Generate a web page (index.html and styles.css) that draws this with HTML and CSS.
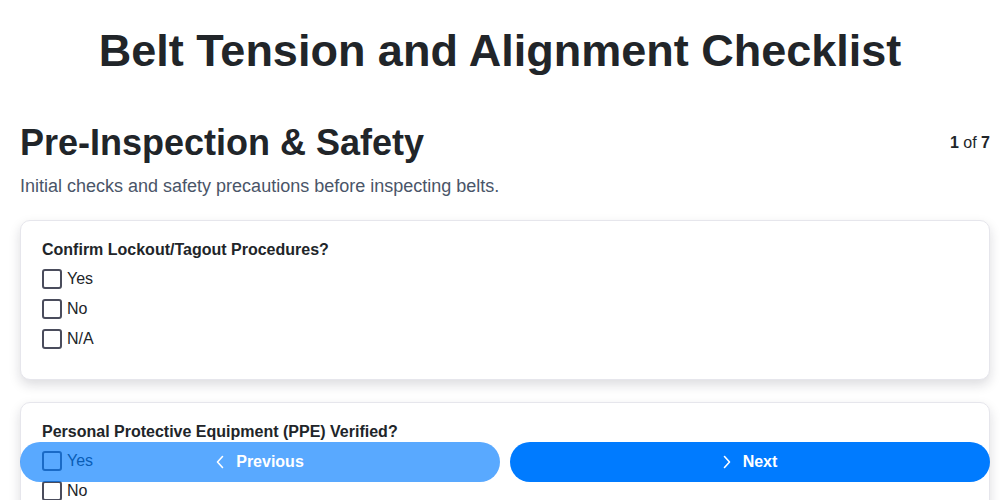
FILE: index.html
```html
<!DOCTYPE html>
<html lang="en">
<head>
<meta charset="utf-8">
<title>Belt Tension and Alignment Checklist</title>
<link rel="stylesheet" href="styles.css">
</head>
<body>
<header class="page-header">
  <h1 class="page-title">Belt Tension and Alignment Checklist</h1>
</header>
<main class="container">
  <section class="section">
    <div class="section-head">
      <h2 class="section-title">Pre-Inspection &amp; Safety</h2>
      <div class="step-count"><b>1</b> of <b>7</b></div>
    </div>
    <p class="section-desc">Initial checks and safety precautions before inspecting belts.</p>

    <div class="card">
      <div class="question">Confirm Lockout/Tagout Procedures?</div>
      <label class="option"><span class="box"></span><span>Yes</span></label>
      <label class="option"><span class="box"></span><span>No</span></label>
      <label class="option"><span class="box"></span><span>N/A</span></label>
    </div>

    <div class="card">
      <div class="question">Personal Protective Equipment (PPE) Verified?</div>
      <label class="option"><span class="box"></span><span>Yes</span></label>
      <label class="option"><span class="box"></span><span>No</span></label>
      <label class="option"><span class="box"></span><span>N/A</span></label>
    </div>
  </section>
</main>
<nav class="nav-bar">
  <button class="nav-btn prev" type="button">
    <svg class="chev" viewBox="0 0 8 14" width="8" height="14"><path d="M6.5 1.5L1.5 7l5 5.5" fill="none" stroke="#fff" stroke-width="1.6" stroke-linecap="round" stroke-linejoin="round"/></svg>
    <span>Previous</span>
  </button>
  <button class="nav-btn next" type="button">
    <svg class="chev" viewBox="0 0 8 14" width="8" height="14"><path d="M1.5 1.5L6.5 7l-5 5.5" fill="none" stroke="#fff" stroke-width="1.6" stroke-linecap="round" stroke-linejoin="round"/></svg>
    <span>Next</span>
  </button>
</nav>
</body>
</html>
```

FILE: styles.css
```css
* { box-sizing: border-box; }

html, body {
  margin: 0;
  padding: 0;
  background: #ffffff;
}

body {
  font-family: "Liberation Sans", Arial, sans-serif;
  color: #212529;
  overflow: hidden;
}

.page-header {
  padding-top: 24px;
  text-align: center;
}

.page-title {
  margin: 0;
  font-size: 45px;
  line-height: 1.2;
  font-weight: 700;
  color: #212529;
}

.container {
  padding: 43px 10px 120px 20px;
}

.section-head {
  display: flex;
  justify-content: space-between;
  align-items: center;
}

.section-title {
  margin: 0;
  font-size: 36px;
  line-height: 1.2;
  font-weight: 700;
  color: #212529;
}

.step-count {
  font-size: 16px;
  color: #212529;
}

.section-desc {
  margin: 9px 0 20px;
  font-size: 18px;
  line-height: 1.5;
  color: #4a5568;
}

.card {
  background: #fff;
  border: 1px solid #e6e6ec;
  border-radius: 10px;
  box-shadow: 0 5px 12px rgba(20, 20, 40, 0.15);
  padding: 20px 20px 20px 21px;
  margin-bottom: 22px;
}

.question {
  font-size: 16px;
  font-weight: 700;
  line-height: 18px;
  margin-bottom: 10px;
  color: #212529;
}

.option {
  display: flex;
  align-items: center;
  gap: 5px;
  height: 20px;
  margin-bottom: 10px;
  font-size: 16px;
  color: #212529;
}

.box {
  width: 20px;
  height: 20px;
  border: 2px solid #4a4c5c;
  border-radius: 3px;
  background: #fff;
}

.nav-bar {
  position: fixed;
  left: 20px;
  right: 10px;
  bottom: 18px;
  display: flex;
  gap: 10px;
}

.nav-btn {
  flex: 1;
  height: 40px;
  border: 0;
  border-radius: 20px;
  background: #007bff;
  color: #fff;
  font-family: "Liberation Sans", Arial, sans-serif;
  font-size: 16px;
  font-weight: 700;
  display: flex;
  align-items: center;
  justify-content: center;
  gap: 12px;
}

.nav-btn.prev {
  opacity: 0.65;
}

.chev {
  display: block;
}
```
